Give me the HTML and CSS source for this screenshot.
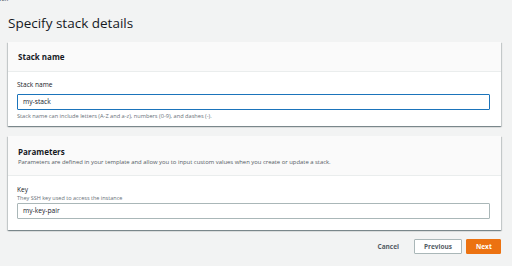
FILE: index.html
```html
<!DOCTYPE html>
<html>
<head>
<meta charset="utf-8">
<link rel="stylesheet" href="styles.css">
</head>
<body>
<div class="crumb">Stack</div>
<h1 class="title">Specify stack details</h1>
<section class="card card-first">
  <div class="card-head"><h2 class="head-title">Stack name</h2></div>
  <div class="card-body">
    <div class="label">Stack name</div>
    <div class="input input-focus">my-stack</div>
    <div class="hint">Stack name can include letters (A-Z and a-z), numbers (0-9), and dashes (-).</div>
  </div>
</section>
<section class="card">
  <div class="card-head card-head-tall">
    <h2 class="head-title">Parameters</h2>
    <div class="head-desc">Parameters are defined in your template and allow you to input custom values when you create or update a stack.</div>
  </div>
  <div class="card-body card-body-2">
    <div class="label">Key</div>
    <div class="desc">They SSH key used to access the instance</div>
    <div class="input">my-key-pair</div>
  </div>
</section>
<div class="actions">
  <button class="btn btn-link">Cancel</button>
  <button class="btn btn-normal">Previous</button>
  <button class="btn btn-primary">Next</button>
</div>
</body>
</html>
```
FILE: styles.css
```css
* { box-sizing: border-box; }
html, body { margin: 0; padding: 0; }
body {
  background: #f2f3f3;
  font-family: "Open Sans", "Noto Sans", sans-serif;
  color: #16191f;
  width: 512px;
  height: 266px;
  overflow: hidden;
}
.crumb {
  font-size: 7px;
  line-height: 8px;
  margin: -5px 0 0 -9px;
  color: #545b64;
}
.title {
  font-size: 13.5px;
  font-weight: 400;
  line-height: 20px;
  margin: 10px 0 0 8px;
  color: #16191f;
}
.card {
  margin: 0 11px 0 8px;
  background: #fff;
  box-shadow: 0 1px 1px 0 rgba(0,28,36,0.3), 1px 1px 1px 0 rgba(0,28,36,0.15), -1px 1px 1px 0 rgba(0,28,36,0.15);
}
.card-first { margin-top: 9px; margin-bottom: 10px; }
.card-head {
  background: #fafafa;
  border-bottom: 1px solid #eaeded;
  height: 30px;
  padding: 0 10px;
  display: flex;
  flex-direction: column;
  justify-content: center;
}
.card-head-tall { height: 40px; padding-top: 1px; }
.head-title {
  margin: 0;
  font-size: 8px;
  font-weight: 700;
  line-height: 11px;
}
.head-desc {
  font-size: 5.9px;
  line-height: 10px;
  color: #545b64;
}
.card-body { padding: 8px 10px 0 9px; height: 54px; }
.card-body-2 { padding-top: 9px; height: 54px; }
.label {
  font-size: 6.6px;
  line-height: 9px;
  color: #16191f;
}
.desc {
  font-size: 5.5px;
  line-height: 8px;
  color: #687078;
  margin-bottom: 1px;
}
.input {
  margin-top: 5px;
  height: 16px;
  border: 1px solid #aab7b8;
  border-radius: 1px;
  font-size: 6.7px;
  line-height: 14px;
  padding: 0 5px;
  margin-right: 1px;
}
.card-body-2 .input { margin-top: 0; }
.input-focus {
  border: 1.5px solid #1b74bb;
  line-height: 13px;
}
.hint {
  font-size: 5.65px;
  line-height: 10px;
  color: #687078;
  margin-top: 1px;
}
.actions {
  display: flex;
  justify-content: flex-end;
  align-items: center;
  gap: 4px;
  margin: 9px 11px 0 0;
}
.btn {
  font-family: inherit;
  font-size: 6.5px;
  font-weight: 700;
  height: 15px;
  padding: 0 9px;
  border-radius: 1px;
  cursor: pointer;
}
.btn-link {
  background: none;
  border: none;
  color: #545b64;
  margin-right: 2px;
}
.btn-normal {
  background: #fff;
  border: 1px solid #aab7b8;
  color: #545b64;
  width: 48px;
}
.btn-primary {
  background: #ec7211;
  border: 1px solid #ec7211;
  color: #fff;
  width: 35px;
}
```
